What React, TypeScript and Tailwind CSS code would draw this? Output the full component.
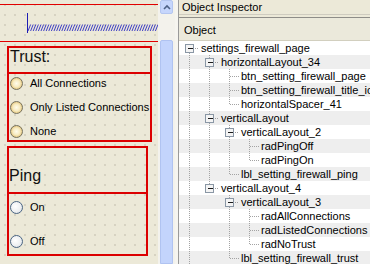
type TreeRow = { name: string; level: number; box?: boolean; last: boolean };

const rows: TreeRow[] = [
  { name: "settings_firewall_page", level: 0, box: true, last: false },
  { name: "horizontalLayout_34", level: 1, box: true, last: false },
  { name: "btn_setting_firewall_page", level: 2, last: false },
  { name: "btn_setting_firewall_title_icon", level: 2, last: false },
  { name: "horizontalSpacer_41", level: 2, last: true },
  { name: "verticalLayout", level: 1, box: true, last: false },
  { name: "verticalLayout_2", level: 2, box: true, last: false },
  { name: "radPingOff", level: 3, last: false },
  { name: "radPingOn", level: 3, last: true },
  { name: "lbl_setting_firewall_ping", level: 2, last: true },
  { name: "verticalLayout_4", level: 1, box: true, last: true },
  { name: "verticalLayout_3", level: 2, box: true, last: false },
  { name: "radAllConnections", level: 3, last: false },
  { name: "radListedConnections", level: 3, last: false },
  { name: "radNoTrust", level: 3, last: true },
  { name: "lbl_setting_firewall_trust", level: 2, last: true },
];

const DOT = "#a3a3a3";

function Branches({ row, open }: { row: TreeRow; open: boolean[] }) {
  const w = 20 * (row.level + 1);
  const cx = 20 * row.level + 10.5;
  return (
    <svg width={w} height={14} className="shrink-0" shapeRendering="crispEdges">
      {open.map((o, c) =>
        o ? (
          <line key={c} x1={20 * c + 10.5} y1={0} x2={20 * c + 10.5} y2={14} stroke={DOT} strokeDasharray="1 1" />
        ) : null
      )}
      {row.level > 0 && <line x1={cx} y1={0} x2={cx} y2={7} stroke={DOT} strokeDasharray="1 1" />}
      {!row.last && <line x1={cx} y1={8} x2={cx} y2={14} stroke={DOT} strokeDasharray="1 1" />}
      <line x1={row.box ? cx + 5 : cx} y1={7.5} x2={w} y2={7.5} stroke={DOT} strokeDasharray="1 1" />
      {row.box && (
        <g>
          <rect x={cx - 4} y={3.5} width={8} height={8} fill="#f4f4f4" stroke="#8a97a5" />
          <line x1={cx - 2} y1={7.5} x2={cx + 3} y2={7.5} stroke="#1a1a1a" />
        </g>
      )}
    </svg>
  );
}

function Tree() {
  const lastAt: boolean[] = [];
  return (
    <div className="flex flex-col">
      {rows.map((row, i) => {
        const open = lastAt.slice(0, row.level).map((l) => !l);
        lastAt[row.level] = row.last;
        return (
          <div
            key={row.name}
            className={`flex h-[14px] items-center whitespace-nowrap ${i % 2 ? "bg-[#eeeeee]" : "bg-white"}`}
          >
            <Branches row={row} open={open} />
            <span className="ml-[2px] leading-[14px]">{row.name}</span>
          </div>
        );
      })}
    </div>
  );
}

function Radio({ label, tone }: { label: string; tone: "trust" | "ping" }) {
  const circle =
    tone === "trust"
      ? "border-[#76725f] bg-[radial-gradient(circle_at_50%_50%,#fffcec_0%,#f7ebc0_45%,#e3c274_80%,#cfa650_100%)]"
      : "border-[#4a6583] bg-[radial-gradient(circle_at_40%_40%,#ffffff_0%,#eef0f2_55%,#cfd4da_100%)]";
  return (
    <div className="flex h-[14px] items-center pl-[1px]">
      <span className={`h-[13px] w-[13px] shrink-0 rounded-full border ${circle}`} />
      <span className="ml-[7px] text-[11px] leading-[14px] text-black">{label}</span>
    </div>
  );
}

function Spring() {
  let d = "";
  for (let x = 1; x < 130; x += 2.6) d += `M${x} 26 L${x + 2.6} 19.5 `;
  return (
    <svg width={131} height={36} className="absolute left-[27px] top-0">
      <line x1={0.5} y1={8} x2={0.5} y2={28} stroke="#1d1db4" />
      <path d={d} fill="none" stroke="#2a2ac2" strokeWidth={0.9} />
    </svg>
  );
}

export default function App() {
  return (
    <div className="flex h-[264px] w-[370px] overflow-hidden bg-[#ece9d8] font-['Liberation_Sans',Arial,sans-serif] text-[11px] text-black">
      {/* form canvas */}
      <div className="flex w-[158px] shrink-0 flex-col bg-[#ece9d8] bg-[radial-gradient(circle,#bdb9a8_0.6px,transparent_0.8px)] bg-[length:10px_10px]">
        <div className="h-[4px]" />
        <div className="relative h-[38px] border-y border-[#e10000]">
          <Spring />
        </div>
        <div className="ml-[7px] mt-[4px] w-[145px] border-2 border-[#dc0000]">
          <div className="h-[24px] pl-[1px] text-[16px] leading-[18px] text-[#111]">Trust:</div>
          <div className="flex h-[68px] flex-col gap-[10px] border-t-2 border-[#dc0000] pt-[2px]">
            <Radio label="All Connections" tone="trust" />
            <Radio label="Only Listed Connections" tone="trust" />
            <Radio label="None" tone="trust" />
          </div>
        </div>
        <div className="ml-[7px] mt-[4px] w-[141px] border-2 border-[#dc0000]">
          <div className="h-[44px] pt-[19px] text-[16px] leading-[18px] text-[#111]">Ping</div>
          <div className="flex flex-col gap-[20px] border-t-2 border-[#dc0000] pb-[6px] pt-[6px]">
            <Radio label="On" tone="ping" />
            <Radio label="Off" tone="ping" />
          </div>
        </div>
      </div>

      {/* scrollbar */}
      <div className="flex w-[17px] shrink-0 flex-col bg-[#f3f2ec]">
        <div className="ml-[2px] flex h-[14px] w-[13px] items-center justify-center rounded-[2px] border border-[#b4c6f0] bg-[#c6d6fc]">
          <svg width="8" height="6" viewBox="0 0 8 6">
            <path d="M1 5 L4 2 L7 5" fill="none" stroke="#4d6185" strokeWidth="1.6" />
          </svg>
        </div>
        <div className="ml-[2px] mt-[26px] w-[13px] flex-1 rounded-t-[2px] border border-[#b0c3f1] bg-[#c3d4fc]" />
      </div>
      <div className="w-[3px] shrink-0 bg-[#f6f5f0]" />
      <div className="w-px shrink-0 bg-[#9a9a9a]" />

      {/* object inspector */}
      <div className="flex min-w-0 flex-1 flex-col">
        <div className="h-[14px] pl-[3px] leading-[14px]">Object Inspector</div>
        <div className="h-[4px] border-y border-t-[#cfccc0] border-b-[#8e8d88]" />
        <div className="flex h-[23px] items-center border-b border-[#d2cfbf] bg-[#ebe9db] pl-[5px] pt-[2px]">Object</div>
        <div className="flex-1 overflow-hidden bg-white">
          <Tree />
        </div>
      </div>
    </div>
  );
}
